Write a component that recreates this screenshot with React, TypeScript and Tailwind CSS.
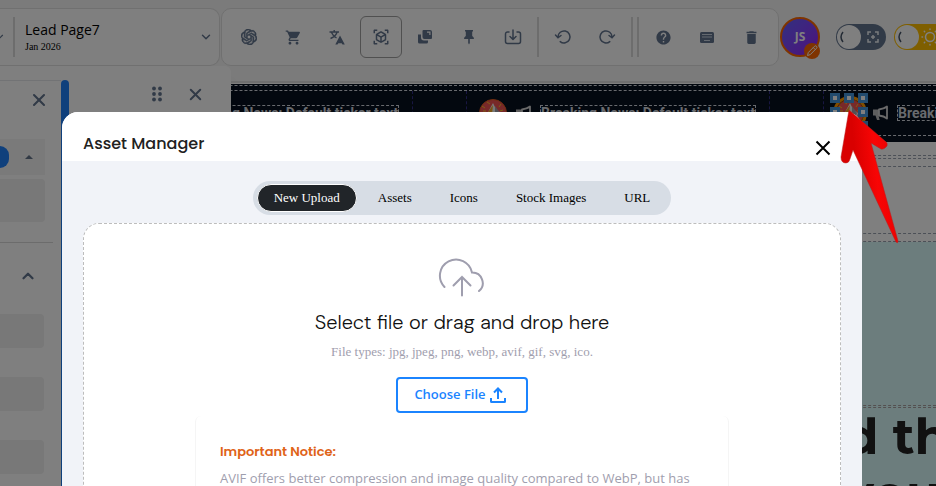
import type { ReactNode } from 'react';
import { SiOpenai } from 'react-icons/si';
import { MdDelete, MdHelp, MdShoppingCart, MdViewInAr } from 'react-icons/md';
import { ChevronDown, ChevronUp, X } from 'lucide-react';

function ToolButton({ label, active, children }: { label: string; active?: boolean; children: ReactNode }) {
  return (
    <div className="flex w-11 shrink-0 justify-center">
      <button
        type="button"
        aria-label={label}
        className={
          active
            ? 'flex size-[42px] items-center justify-center rounded-md border border-[#a0a0a0] text-slate-500'
            : 'flex size-[42px] items-center justify-center text-slate-500'
        }
      >
        {children}
      </button>
    </div>
  );
}

function ToolDivider() {
  return <div className="mx-0.5 h-10 w-0.5 shrink-0 bg-[#dadada]" />;
}

function TranslateIcon() {
  return (
    <svg width="16" height="16" viewBox="0 0 16 16" fill="none" stroke="currentColor" strokeWidth="1.4">
      <path d="M.5 3h9.500M5.200 1v2M2.500 3.500Q4 7 7.500 9M8 3.500Q6.500 7.500 1.500 9.500" />
      <path d="M11 6.500 15.800 15.500h-2.300l-.8-1.200h-3.400l-.8 1.200H6.300Z" fill="currentColor" stroke="none" />
    </svg>
  );
}

function DuplicateIcon() {
  return (
    <svg width="16" height="16" viewBox="0 0 16 16" fill="currentColor">
      <path fillRule="evenodd" d="M6.500 1H13a2 2 0 0 1 2 2v6a1 1 0 0 1-1 1H7.500a2 2 0 0 1-2-2V2a1 1 0 0 1 1-1Zm3.500 1.500v1.200h2.300V6h1.200V2.500Z" />
      <path d="M1 5.500h3V8.500a3 3 0 0 0 3 3h4v1.500a1.500 1.500 0 0 1-1.500 1.500h-7A1.500 1.500 0 0 1 1 13Z" />
    </svg>
  );
}

function PinIcon() {
  return (
    <svg width="12" height="16" viewBox="0 0 12 16" fill="currentColor">
      <path d="M2 1h8v1.500H9.200V7Q11 8 11 10H6.800v4L6 15.500 5.200 14v-4H1Q1 8 2.800 7V2.500H2Z" />
    </svg>
  );
}

function ImportIcon() {
  return (
    <svg width="18" height="16" viewBox="0 0 18 16" fill="none" stroke="currentColor" strokeWidth="1.500" strokeLinecap="round" strokeLinejoin="round">
      <path d="M5 3H3.500A2 2 0 0 0 1.500 5v7.500a2 2 0 0 0 2 2h11a2 2 0 0 0 2-2V5a2 2 0 0 0-2-2H13M9 1v9M6 7.500 9 10.500l3-3" />
    </svg>
  );
}

function UndoIcon() {
  return (
    <svg width="18" height="16" viewBox="0 0 18 16" fill="none" stroke="currentColor" strokeWidth="1.500" strokeLinecap="round">
      <path d="M4 8A6 6 0 1 1 6.200 12.600M1.500 6 4 8.700 7 6.500" />
    </svg>
  );
}

function RedoIcon() {
  return (
    <svg width="18" height="16" viewBox="0 0 18 16" fill="none" stroke="currentColor" strokeWidth="1.500" strokeLinecap="round">
      <path d="M14 8A6 6 0 1 0 11.800 12.600M16.500 6 14 8.700 11 6.500" />
    </svg>
  );
}

function KeyboardIcon() {
  return (
    <svg width="16" height="16" viewBox="0 0 16 16">
      <rect x="1" y="3" width="14" height="11" rx="1.500" fill="currentColor" />
      <path d="M3 5.500h10M3 8h10M5 11.500h6" stroke="#cbd5e1" strokeWidth="1" />
    </svg>
  );
}

function MegaphoneIcon() {
  return (
    <svg width="17" height="16" viewBox="0 0 17 16" className="ml-2 shrink-0">
      <path d="M1 4.500h6v6H6.500l1.200 4.500H5L3.500 10.500H1Z" fill="#bdbdbd" />
      <path d="M7 4.500Q12 4 15 1.500v12Q12 11 7 10.500Z" fill="none" stroke="#d4d4d4" strokeWidth="1.800" strokeLinejoin="round" />
    </svg>
  );
}

function HorseLogo() {
  return (
    <svg width="28" height="28" viewBox="0 0 28 28" className="shrink-0">
      <circle cx="14" cy="14" r="13.500" fill="#f05252" stroke="#e25d1c" />
      <path d="M3 7l3 2M8 3l3 2M22 5l-2 3M4 12h3M24 11l-3 1" stroke="#fbbf24" strokeWidth="1" />
      <path d="M14 4 17 10 22 14 20 22 9 23 8 15Z" fill="#f1f1f1" />
      <path d="m14 6-5 7-2 7 6-5Z" fill="#f5a623" />
      <path d="m16 7 5 7-2 6-3-7Z" fill="#a1a1aa" />
    </svg>
  );
}

function SelectionHandles() {
  const handles = [0, 1, 2, 3, 4, 5, 6, 7, 8];
  return (
    <div className="absolute -top-1.5 -left-1.5 grid w-[38px] grid-cols-3 gap-1">
      {handles.map((h) => (
        <span
          key={h}
          className={h === 4 ? 'size-2.5' : 'flex size-2.5 items-center justify-center bg-[#4596dc]'}
        >
          {h !== 4 && <span className="size-1 bg-white" />}
        </span>
      ))}
    </div>
  );
}

function TickerItem({ selected }: { selected?: boolean }) {
  return (
    <div className="flex w-[304px] shrink-0 items-center border-x border-dashed border-indigo-900 pl-3">
      <span className={selected ? 'relative rounded-full outline-3 outline-amber-500' : 'relative'}>
        <HorseLogo />
        {selected && <SelectionHandles />}
      </span>
      <MegaphoneIcon />
      <span className="ml-2 border border-dashed border-gray-300 font-[Roboto,sans-serif] text-[14px]/[14px] font-bold whitespace-nowrap text-gray-300">
        Breaking News: Default ticker text
      </span>
    </div>
  );
}

function TopBar() {
  return (
    <header className="flex h-[83px] shrink-0 items-start gap-px border-b-2 border-[#dedede] bg-[#f6f6f6] pt-2">
      <div className="flex h-[58px] w-[220px] shrink-0 items-center rounded-r-[10px] border border-l-0 border-[#e0e0e0] bg-white">
        <ChevronDown size={14} className="-ml-2 shrink-0 text-slate-500" />
        <div className="ml-[7px] h-10 w-0.5 bg-[#dadada]" />
        <button type="button" className="ml-2.5 flex flex-1 items-center justify-between pr-1.5 text-left">
          <span className="pt-0.5">
            <span className="block font-['Open_Sans',sans-serif] text-[14px]/[18px] text-black">Lead Page7</span>
            <span className="block font-['Liberation_Serif',serif] text-[10px]/[16px] text-black">Jan 2026</span>
          </span>
          <ChevronDown size={14} strokeWidth={2.5} className="text-slate-500" />
        </button>
      </div>
      <div className="flex h-[58px] shrink-0 items-center rounded-[10px] border border-[#e0e0e0] bg-white px-[5px]">
        <ToolButton label="AI assistant"><SiOpenai size={16} className="stroke-current stroke-1" /></ToolButton>
        <ToolButton label="Cart"><MdShoppingCart size={17} /></ToolButton>
        <ToolButton label="Translate"><TranslateIcon /></ToolButton>
        <ToolButton label="Components" active><MdViewInAr size={18} /></ToolButton>
        <ToolButton label="Duplicate"><DuplicateIcon /></ToolButton>
        <ToolButton label="Pin"><PinIcon /></ToolButton>
        <ToolButton label="Import"><ImportIcon /></ToolButton>
        <ToolDivider />
        <ToolButton label="Undo"><UndoIcon /></ToolButton>
        <ToolButton label="Redo"><RedoIcon /></ToolButton>
        <ToolDivider />
        <ToolDivider />
        <ToolButton label="Help"><MdHelp size={17} /></ToolButton>
        <ToolButton label="Shortcuts"><KeyboardIcon /></ToolButton>
        <ToolButton label="Delete"><MdDelete size={17} /></ToolButton>
      </div>
      <div className="flex h-[58px] items-center">
        <div className="relative flex size-10 shrink-0 items-center justify-center rounded-full border-2 border-orange-500 bg-linear-to-br from-indigo-500 to-purple-600 font-['Open_Sans',sans-serif] text-xs font-bold text-white">
          JS
          <span className="absolute -right-0.5 -bottom-1 flex size-4 items-center justify-center rounded-full bg-orange-500">
            <svg width="12" height="12" viewBox="0 0 12 12" fill="none" stroke="#fff" strokeWidth="1">
              <path d="m1.500 10.500.8-3L8.500 1.300a1.300 1.300 0 0 1 2 2L4.300 9.600ZM7.300 2.600l2 2" />
            </svg>
          </span>
        </div>
        <button type="button" role="switch" aria-checked="false" aria-label="Full screen" className="ml-4 flex h-[26px] w-[50px] shrink-0 items-center rounded-full bg-slate-500 pl-px">
          <span className="flex size-6 items-center rounded-full bg-white pl-0.5">
            <svg width="5" height="12" viewBox="0 0 5 12" fill="none" stroke="#475569" strokeWidth="1.500"><path d="M4 1Q0 6 4 11" /></svg>
          </span>
          <svg width="12" height="12" viewBox="0 0 12 12" fill="none" stroke="#f1f5f9" strokeWidth="1.500" className="ml-1.5">
            <path d="M1 4V1h3M8 1h3v3M11 8v3H8M4 11H1V8" />
            <path d="M6 4v4M4 6h4" />
          </svg>
        </button>
        <button type="button" role="switch" aria-checked="false" aria-label="Light mode" className="ml-2 flex h-[26px] w-[54px] shrink-0 items-center gap-0.5 rounded-full bg-[#ffbf00] pl-px">
          <span className="flex size-6 items-center rounded-full bg-white pl-0.5">
            <svg width="5" height="12" viewBox="0 0 5 12" fill="none" stroke="#475569" strokeWidth="1.500"><path d="M4 1Q0 6 4 11" /></svg>
          </span>
          <svg width="18" height="18" viewBox="0 0 18 18" fill="none" stroke="#fff" strokeWidth="1.500" strokeLinecap="round">
            <circle cx="9" cy="9" r="4.500" />
            <path d="M9 1v.5M9 16.500v.5M1 9h.5M16.500 9h.5M3.300 3.300l.3.300M14.400 14.400l.3.300M3.300 14.700l.3-.3M14.400 3.600l.3-.3" />
          </svg>
        </button>
      </div>
    </header>
  );
}

function Canvas() {
  return (
    <main className="flex flex-1 flex-col overflow-hidden bg-white">
      <div className="mt-px flex h-[58px] shrink-0 flex-col bg-[#07101f] pt-px pb-1.5">
        <div className="flex flex-1 flex-col border-t border-dashed border-gray-300 pt-1">
          <div className="flex flex-1 gap-[53px] border-y border-dashed border-gray-300 pl-[109px]">
            <TickerItem />
            <TickerItem />
            <TickerItem selected />
          </div>
        </div>
      </div>
      <div className="mt-[13px] flex h-[87px] shrink-0 flex-col border-y border-dashed border-gray-400 pt-0.5 pb-[7px]">
        <div className="flex-1 border-y border-dashed border-gray-400 pt-[7px]">
          <div className="h-px border-t border-dashed border-gray-400" />
        </div>
      </div>
      <div className="flex flex-1 flex-col bg-[#d9fafb] pt-[163px]">
        <div className="h-[3px] shrink-0 border-y border-dashed border-[#a8a0a0]" />
        <h1 className="pl-[844px] font-[Montserrat,Inter,sans-serif] text-[50px]/[57px] font-bold whitespace-nowrap text-[#222]">
          d th<br />your
        </h1>
      </div>
    </main>
  );
}

function SidePanels() {
  return (
    <aside className="absolute top-[66px] bottom-0 left-0 w-[231px] rounded-tr-md bg-white shadow-xl">
      <div className="flex h-full">
        <div className="mt-3.5 w-[61px] shrink-0 border-t border-gray-200 bg-white shadow-xl">
          <div className="flex h-[58px] items-start justify-end pt-[9px] pr-3">
            <button type="button" aria-label="Close layers" className="text-slate-500"><X size={20} strokeWidth={2.5} /></button>
          </div>
          <div className="mr-4 flex h-9 items-center justify-between bg-[#f4f4f4] pr-3">
            <span className="h-[22px] w-[9px] rounded-r-full bg-[#1f80f9]" />
            <svg width="8" height="4" viewBox="0 0 8 4"><path d="m0 4 4-4 4 4Z" fill="#64748b" /></svg>
          </div>
          <div className="mt-1 mr-4 h-[43px] rounded-r bg-[#f0f0f0]" />
          <div className="mt-5 mr-2 h-px bg-[#d8d8d8]" />
          <div className="flex h-[71px] items-start justify-end pt-6 pr-6">
            <ChevronUp size={18} strokeWidth={3} className="text-slate-500" />
          </div>
          <div className="mr-[17px] flex flex-col gap-[29px]">
            <div className="h-[34px] rounded-r bg-[#f0f0f0]" />
            <div className="h-[34px] rounded-r bg-[#f0f0f0]" />
            <div className="h-[34px] rounded-r bg-[#f0f0f0]" />
          </div>
        </div>
        <div className="mt-3.5 w-2 shrink-0 rounded-t bg-[#1f80f9]" />
        <div className="flex h-14 flex-1 items-center justify-end gap-6 pr-[26px] text-slate-500">
          <svg width="10" height="16" viewBox="0 0 10 16" fill="currentColor">
            <circle cx="2" cy="2.500" r="1.900" /><circle cx="8" cy="2.500" r="1.900" />
            <circle cx="2" cy="8" r="1.900" /><circle cx="8" cy="8" r="1.900" />
            <circle cx="2" cy="13.500" r="1.900" /><circle cx="8" cy="13.500" r="1.900" />
          </svg>
          <button type="button" aria-label="Close panel"><X size={19} strokeWidth={2.5} /></button>
        </div>
      </div>
    </aside>
  );
}

const tabs = ['New Upload', 'Assets', 'Icons', 'Stock Images', 'URL'];

function AssetManager() {
  return (
    <section role="dialog" aria-label="Asset Manager" className="flex min-w-0 flex-1 flex-col overflow-hidden rounded-t-2xl bg-[#f1f3f8]">
      <div className="flex h-[49px] shrink-0 items-center justify-between bg-white pt-[18px] pr-[25px] pb-1 pl-[21px]">
        <h2 className="font-[Poppins,Inter,sans-serif] text-[16px]/[24px] font-medium text-[#212121]">Asset Manager</h2>
        <button type="button" aria-label="Close" className="mt-2 text-black">
          <svg width="28" height="28" viewBox="0 0 28 28" fill="none" stroke="currentColor" strokeWidth="2">
            <path d="m7.500 7.500 13 13M20.500 7.500l-13 13" />
          </svg>
        </button>
      </div>
      <div className="flex flex-1 flex-col items-center px-[21px] pt-5">
        <div role="tablist" className="flex h-[34px] shrink-0 items-center gap-1 rounded-full bg-[#d7dde5] px-1">
          {tabs.map((tab, i) => (
            <button
              key={tab}
              type="button"
              role="tab"
              aria-selected={i === 0}
              className={
                i === 0
                  ? "h-7 rounded-full border border-white bg-[#212529] px-4 font-['Liberation_Serif',serif] text-[13px] text-white"
                  : "h-7 rounded-full border border-transparent px-4 font-['Liberation_Serif',serif] text-[13px] text-black"
              }
            >
              {tab}
            </button>
          ))}
        </div>
        <div className="mt-2 flex w-full flex-1 flex-col items-center rounded-t-2xl border border-b-0 border-dashed border-[#bdbdbd] bg-white pt-[33px]">
          <svg width="48" height="40" viewBox="0 0 48 40" className="shrink-0" fill="none" stroke="#9f9eae" strokeWidth="2" strokeLinecap="round">
            <path d="M6.500 30A16.200 16.200 0 1 1 34 15.500a10.500 10.500 0 0 1 7 18.500" />
            <path d="M24 38.500V20M15.500 28.500 24 20l8.500 8.500" />
          </svg>
          <h3 className="mt-3 font-['DM_Sans',Inter,sans-serif] text-[20px]/[26px] font-light text-[#111]">Select file or drag and drop here</h3>
          <p className="mt-2 font-['Liberation_Serif',serif] text-[13px]/[18px] text-[#9f9eae]">
            File types: jpg, jpeg, png, webp, avif, gif, svg, ico.
          </p>
          <button type="button" className="mt-4 flex h-9 shrink-0 items-center gap-1 rounded border-2 border-[#1b84ff] pr-5 pl-4 font-['Open_Sans',sans-serif] text-[13px] font-semibold text-[#1b84ff]">
            Choose File
            <svg width="16" height="16" viewBox="0 0 16 16" fill="none" stroke="currentColor" strokeWidth="2">
              <path d="M1 11v3.500a.5.5 0 0 0 .5.5h13a.5.5 0 0 0 .5-.5V11M8 12V1.500M4 5.500l4-4 4 4" />
            </svg>
          </button>
          <div className="mt-[3px] w-[534px] flex-1 rounded-t-md border-x border-[#f5f5f5] px-6 pt-[25px]">
            <h4 className="font-[Poppins,Inter,sans-serif] text-[13px]/[22px] font-semibold text-[#e06318]">Important Notice:</h4>
            <p className="mt-1 font-['Open_Sans',sans-serif] text-[13px]/[22px] text-[#9f9eae]">
              AVIF offers better compression and image quality compared to WebP, but has
            </p>
          </div>
        </div>
      </div>
    </section>
  );
}

function PointerArrow() {
  return (
    <svg width="64" height="144" viewBox="836 104 64 144" className="absolute top-[104px] left-[836px] z-20">
      <defs>
        <linearGradient id="arrowFill" x1="0" y1="0.2" x2="1" y2="0">
          <stop offset=".2" stopColor="#d90000" />
          <stop offset=".55" stopColor="#f80505" />
          <stop offset="1" stopColor="#e60000" />
        </linearGradient>
      </defs>
      <path
        d="M849 110 841 157Q841 163 846 163 849 163 850 159L853 150 896 242Q898 244 898 241L871 143 881 149Q884 150 887 146 888 143 885 141Z"
        fill="url(#arrowFill)"
        stroke="#b91c1c"
        strokeWidth=".5"
      />
    </svg>
  );
}

export default function App() {
  return (
    <div className="relative flex h-screen flex-col overflow-hidden">
      <TopBar />
      <Canvas />
      <SidePanels />
      <div className="absolute inset-0 z-10 flex bg-black/50 pt-28 pr-[74px] pl-[62px]">
        <AssetManager />
      </div>
      <PointerArrow />
    </div>
  );
}
